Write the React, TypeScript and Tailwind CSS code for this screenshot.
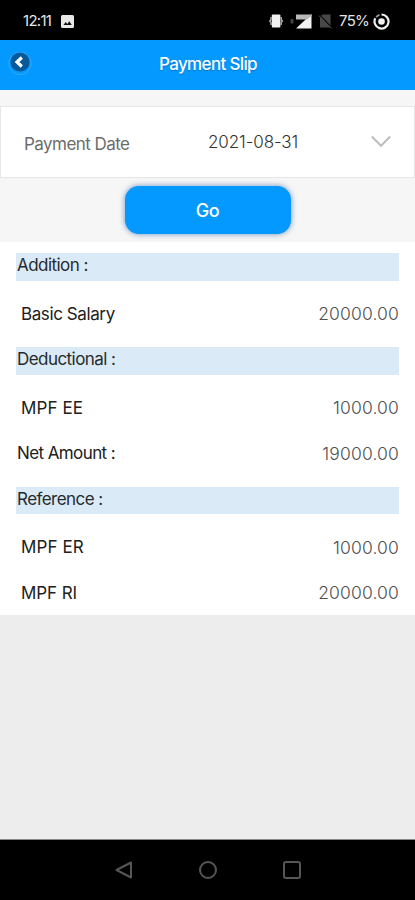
import clsx from 'clsx'

type Line = { label: string; amount: string; total?: boolean; spacing: string }

const ADDITIONS: Line[] = [
  { label: 'Basic Salary', amount: '20000.00', spacing: 'tracking-[-0.4px]' },
]

const DEDUCTIONS: Line[] = [
  { label: 'MPF EE', amount: '1000.00', spacing: 'tracking-[0.1px]' },
  { label: 'Net Amount :', amount: '19000.00', total: true, spacing: 'tracking-[-0.6px]' },
]

const REFERENCES: Line[] = [
  { label: 'MPF ER', amount: '1000.00', spacing: 'tracking-[0.1px]' },
  { label: 'MPF RI', amount: '20000.00', spacing: 'tracking-[-0.1px]' },
]

function StatusBar() {
  return (
    <div className="flex h-10 items-center bg-black pt-0.5 pr-[25px] pl-[23px] text-[15px] text-[#e4e4e4]">
      <span className="tracking-[-0.7px]">12:11</span>
      <svg className="ml-2.5 size-[13px]" viewBox="0 0 13 13">
        <rect width="13" height="13" rx="1.5" fill="#e8e8e8" />
        <path d="M2.5 10l2.2-3 1.6 2 2-2.7 2.5 3.7z" fill="#111" />
      </svg>
      <div className="flex-1" />
      {/* Vibrate */}
      <svg className="h-[14px] w-4" viewBox="0 0 16 14">
        <rect x="3.8" y="0.5" width="8.6" height="13" rx="1" fill="#f2f2f2" />
        <path d="M3 3v2.5L1.8 7 3 8.5V11M13.2 3v2.5L14.4 7l-1.2 1.5V11" fill="none" stroke="#aaa" strokeWidth="1.5" />
      </svg>
      {/* Mobile signal */}
      <svg className="ml-1.5 h-4 w-[22px]" viewBox="0 0 22 16">
        <rect x="0.5" y="6" width="3" height="4.5" rx="1" fill="#444" />
        <path d="M21.5 1v14.5H6z" fill="#f2f2f2" />
        <path d="M6 1.5h15.5v1.5L17 6.5H6z" fill="#b8b8b8" />
      </svg>
      {/* No SIM */}
      <svg className="ml-1.5 h-4 w-[15px]" viewBox="0 0 15 16">
        <path d="M4.5 1.5h8v13H2V4z" fill="#484848" />
        <path d="M1.5 2l12.5 13" stroke="#111" strokeWidth="1.6" />
        <path d="M0.8 2.6l12.5 13" stroke="#555" strokeWidth="0.9" />
      </svg>
      <span className="ml-1.5 w-[31px] whitespace-nowrap tracking-[-0.7px]">75%</span>
      <svg className="ml-[3px] size-[17px]" viewBox="0 0 17 17" fill="none">
        <path d="M8.5 1.5a7 7 0 1 1-6.2 3.8" stroke="#f2f2f2" strokeWidth="2.2" />
        <path d="M3.2 4.1a7 7 0 0 1 3.3-2.3" stroke="#999" strokeWidth="1.8" />
        <circle cx="8.5" cy="8.5" r="3.3" fill="#f2f2f2" />
      </svg>
    </div>
  )
}

function Header() {
  return (
    <header className="grid h-[50px] grid-cols-[1fr_auto_1fr] items-center bg-[#0399ff]">
      <button className="-mt-1 ml-[8px] size-6" aria-label="Back">
        <svg viewBox="0 0 24 24" fill="none">
          <circle cx="12" cy="12.5" r="11.2" stroke="#36a9f4" strokeWidth="1" />
          <circle cx="12" cy="11" r="9.6" fill="#07599a" />
          <path d="M13.8 6.5L9 11l4.8 4.5" stroke="#fff" strokeWidth="3.2" />
        </svg>
      </button>
      <h1 className="mt-[-1px] pl-px text-[17px] font-medium tracking-[-0.65px] text-white [text-shadow:0_1px_1px_rgba(0,50,100,0.35)]">
        Payment Slip
      </h1>
    </header>
  )
}

function SectionTitle({ children }: { children: string }) {
  return (
    <h2 className="h-[27.5px] bg-[#daeaf6] pl-px text-[17px] leading-[25px] tracking-[-0.55px] text-[#262a2e]">
      {children}
    </h2>
  )
}

function Lines({ items }: { items: Line[] }) {
  return (
    <div className="pt-[11px] pb-2.5">
      {items.map((item) => (
        <div key={item.label} className="flex h-[45.5px] items-center justify-between">
          <span className={clsx('text-[17px] text-[#202020]', item.spacing, item.total ? 'pl-px' : 'pl-[5px]')}>
            {item.label}
          </span>
          <span className="text-[17.5px] font-light tracking-[0.15px] text-[#505050]">{item.amount}</span>
        </div>
      ))}
    </div>
  )
}

export default function App() {
  return (
    <div className="flex h-[900px] w-full flex-col overflow-hidden bg-[#ededed] font-['Inter',sans-serif]">
      <StatusBar />
      <Header />

      <div className="h-[152px] bg-[#f6f6f6] pt-4">
        <div className="flex h-[72px] items-center border border-[#e6e6e6] bg-white pr-[23px] pl-[23px]">
          <label className="w-[184px] pt-[5px] text-[17px] tracking-[-0.55px] text-[#6c6c6c]">Payment Date</label>
          <span className="flex-1 pt-0.5 text-[17px] font-light tracking-[-0.1px] text-[#333]">2021-08-31</span>
          <svg className="size-5" viewBox="0 0 20 20" fill="none">
            <path d="M0.8 4.5l9.2 9.3 9.2-9.3" stroke="#bdbdbd" strokeWidth="2" />
          </svg>
        </div>
        <button className="mx-auto mt-[8px] block h-[48px] w-[166px] rounded-[14px] bg-[#0399ff] pt-px text-[18px] font-medium tracking-[-0.5px] text-white shadow-[0_0_5px_1px_rgba(60,110,170,0.55)]">
          Go
        </button>
      </div>

      <main className="h-[373px] bg-white px-4 pt-[11px]">
        <SectionTitle>Addition :</SectionTitle>
        <Lines items={ADDITIONS} />
        <SectionTitle>Deductional :</SectionTitle>
        <Lines items={DEDUCTIONS} />
        <SectionTitle>Reference :</SectionTitle>
        <Lines items={REFERENCES} />
      </main>

      <div className="flex-1" />

      {/* Android navigation */}
      <nav className="flex h-[61px] items-center justify-center gap-16 border-t border-[#888] bg-black">
        <svg className="size-5" viewBox="0 0 20 20" fill="none" stroke="#565656" strokeWidth="2">
          <path d="M17 2.5v15L2.5 10z" strokeLinejoin="round" />
        </svg>
        <svg className="size-5" viewBox="0 0 20 20" fill="none" stroke="#565656" strokeWidth="2">
          <circle cx="10" cy="10" r="8" />
        </svg>
        <svg className="size-5" viewBox="0 0 20 20" fill="none" stroke="#565656" strokeWidth="2">
          <rect x="2" y="2" width="16" height="16" rx="2" />
        </svg>
      </nav>
    </div>
  )
}
